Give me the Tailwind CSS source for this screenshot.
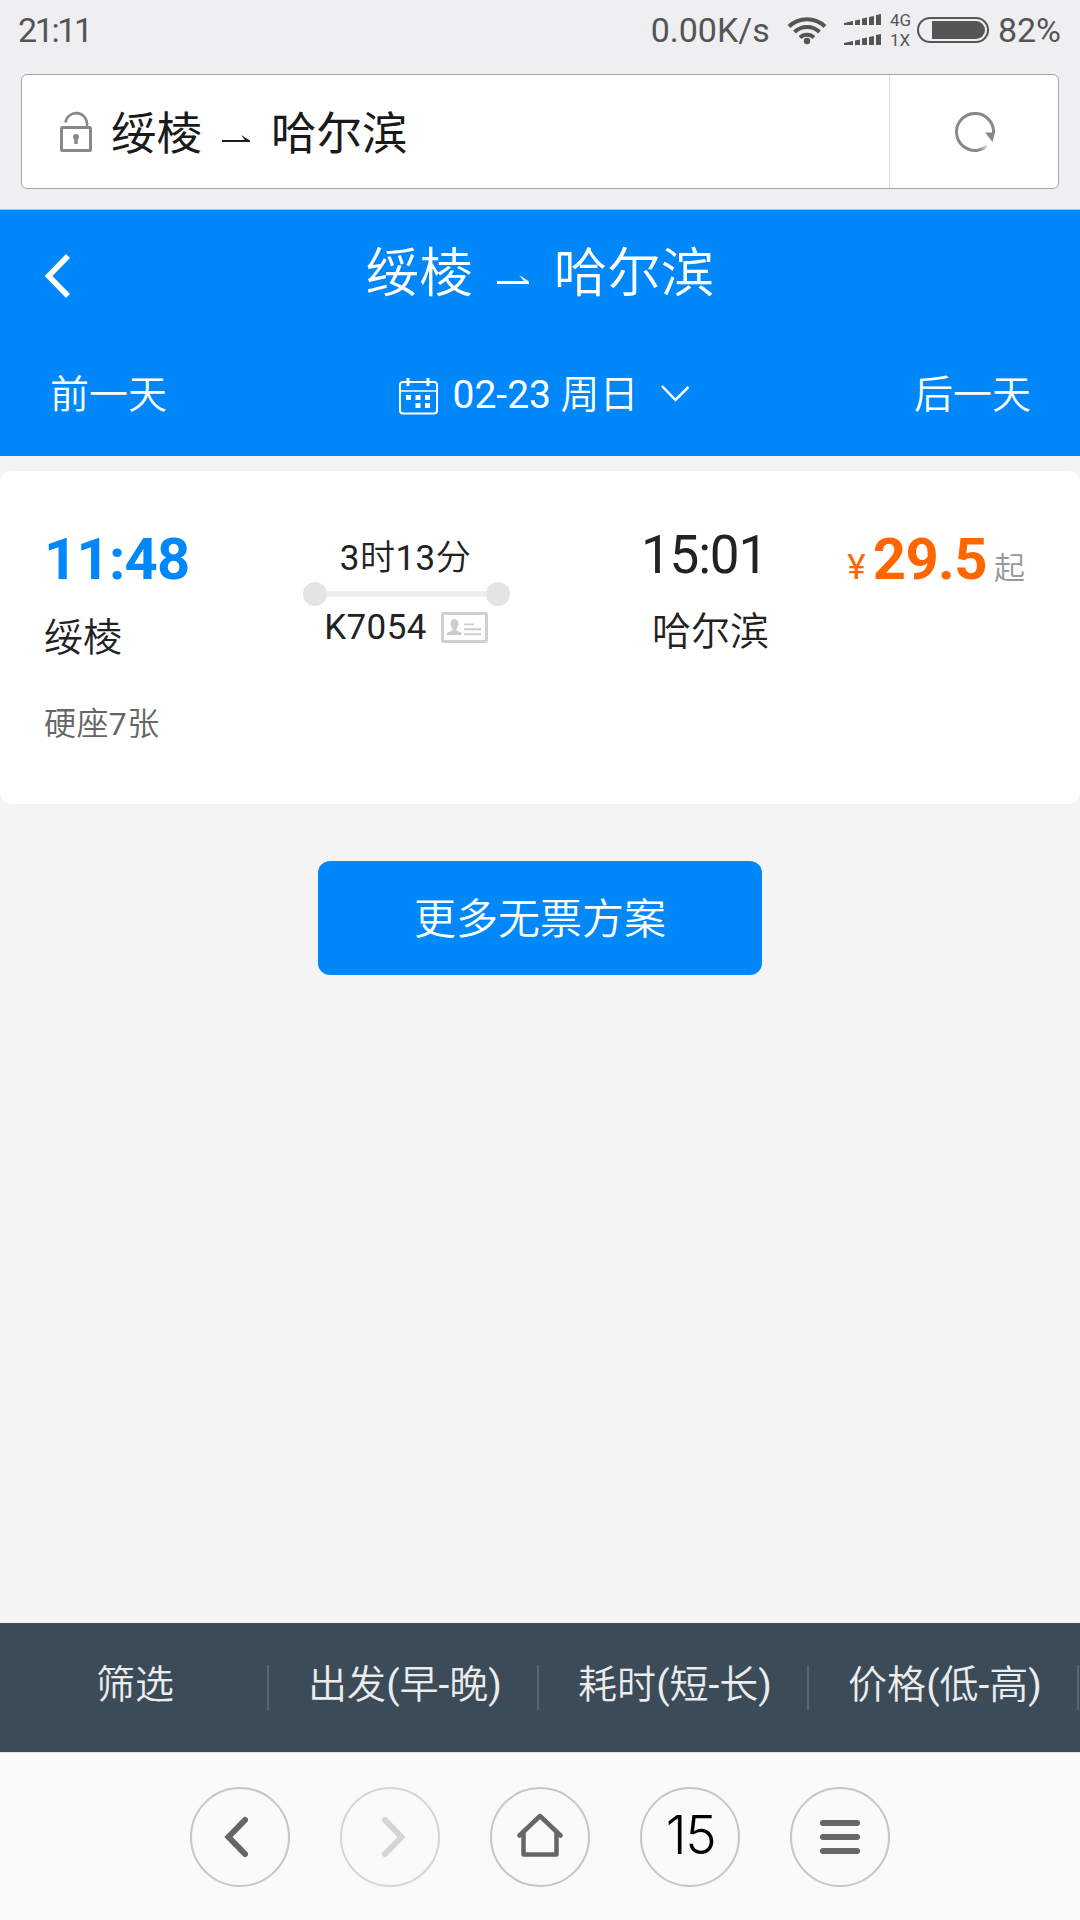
<!DOCTYPE html>
<html lang="zh-CN">
<head>
  <meta charset="UTF-8" />
  <meta name="viewport" content="width=device-width, initial-scale=1.0" />
  <title>绥棱 - 哈尔滨</title>
  <script src="https://cdn.jsdelivr.net/npm/@tailwindcss/browser@4"></script>
</head>
<body class="w-[1080px] h-[1920px] flex flex-col overflow-hidden bg-[#f4f4f4] text-[#222] leading-none whitespace-nowrap font-[Roboto,'Noto_Sans_CJK_SC',sans-serif]">

  <!-- Status bar -->
  <div class="h-[74px] shrink-0 bg-[#efeff1] text-[#555] text-[34px] flex items-start justify-between pl-[18px] pr-[19px]">
    <span class="leading-[60px] tracking-[-2.4px]">21:11</span>
    <div class="flex items-center h-[60px]">
      <span class="mr-[17px]">0.00K/s</span>
      <svg class="w-[40px] h-[30px] mr-[17px]" viewBox="0 0 40 30" fill="none" stroke="#555" stroke-width="4">
        <path d="M2 11.5a26 26 0 0 1 36 0" />
        <path d="M7.5 17a18 18 0 0 1 25 0" />
        <path d="M13 22.5a10 10 0 0 1 14 0" />
        <circle cx="20" cy="26" r="3.2" fill="#555" stroke="none" />
      </svg>
      <svg class="w-[38px] h-[32px] mr-[8px]" viewBox="0 0 38 32" fill="#555">
        <path id="bars" d="M0 9l9-2v4H0zM11 6.500l5-1V11h-5zM18 4.500l5-1V11h-5zM25 3l5-1v9h-5zM32 1l5-1v11h-5z" />
        <use href="#bars" y="20" />
      </svg>
      <div class="flex flex-col w-[27px] text-[17px] leading-[20px]">
        <span>4G</span>
        <span>1X</span>
      </div>
      <svg class="w-[72px] h-[26px] mr-[9px]" viewBox="0 0 72 26">
        <rect x="1" y="1" width="70" height="24" rx="12" fill="none" stroke="#555" stroke-width="2" />
        <path d="M15 4h44a9 9 0 0 1 0 18H15z" fill="#555" />
      </svg>
      <span>82%</span>
    </div>
  </div>

  <!-- Address bar -->
  <div class="h-[136px] shrink-0 bg-[#efeff1] border-b border-[#bbb] px-[21px]">
    <div class="h-[115px] flex bg-white border border-[#a5a5a5] rounded-[6px]">
      <div class="flex-1 flex items-center pl-[38px] border-r border-[#ddd]">
        <svg class="w-[32px] h-[41px] mr-[19px]" viewBox="0 0 32 41" fill="none" stroke="#888">
          <path d="M5.500 11.500a10.800 10.800 0 0 1 21.500 1V16" stroke-width="2.600" />
          <rect x="1.500" y="16.500" width="29" height="23" rx="1" stroke-width="3" />
          <circle cx="16" cy="26" r="3" fill="#888" stroke="none" />
          <path d="M16 26v7" stroke-width="3.500" />
        </svg>
        <span class="text-[45.500px] text-[#1a1a1a] pt-[6px]">绥棱</span>
        <svg class="w-[28px] h-[8px] ml-[20px] mr-[21px] mt-[14px]" viewBox="0 0 28 8" fill="#1a1a1a">
          <path d="M0 5h23L19 0l9 5.500V7H0z" />
        </svg>
        <span class="text-[45.500px] text-[#1a1a1a] pt-[6px]">哈尔滨</span>
      </div>
      <div class="w-[168px] flex items-center justify-center pl-[2px]">
        <svg class="w-[40px] h-[40px]" viewBox="0 0 40 40">
          <defs>
            <linearGradient id="tail" gradientUnits="userSpaceOnUse" x1="24" y1="36" x2="33" y2="33">
              <stop offset="0" stop-color="#888" />
              <stop offset="1" stop-color="#888" stop-opacity="0.100" />
            </linearGradient>
          </defs>
          <path d="M38.500 21A18.500 18.500 0 1 0 23 38.200" fill="none" stroke="#888" stroke-width="3" />
          <path d="M23 38.200a18.500 18.500 0 0 0 9-4.200" fill="none" stroke="url(#tail)" stroke-width="3" />
          <path d="M30 20.500h10l-2.500 9.500z" fill="#888" />
        </svg>
      </div>
    </div>
  </div>

  <!-- Blue header -->
  <header class="h-[246px] shrink-0 bg-[#0087fa] text-white font-[350]">
    <div class="h-[124px] flex items-center">
      <svg class="w-[60px] h-[44px] pl-[44px] box-content mt-[8px]" viewBox="0 0 60 44" fill="none" stroke="#fff" stroke-width="5.500">
        <path d="M24 2L4.500 22 24 42" />
      </svg>
      <div class="flex-1 flex items-center justify-center pr-[104px] text-[53.500px]">
        <span class="pt-[4px]">绥棱</span>
        <svg class="w-[32px] h-[9px] ml-[24px] mr-[25px] mt-[14px]" viewBox="0 0 32 9" fill="#fff">
          <path d="M0 6h27L22 0l10 6.500V9H0z" />
        </svg>
        <span class="pt-[4px]">哈尔滨</span>
      </div>
    </div>
    <div class="h-[122px] flex items-center justify-between pl-[50px] pr-[49px] pb-1 text-[39px]">
      <span class="pt-[4px]">前一天</span>
      <div class="flex items-center pl-[7px]">
        <svg class="w-[39px] h-[37px] mr-[15px] mt-[6px]" viewBox="0 0 39 37" fill="none" stroke="#fff">
          <rect x="1" y="4" width="37" height="31.500" rx="3" stroke-width="2" />
          <path d="M1 13h37" stroke-width="1.300" />
          <path d="M9 0v8M29 0v8" stroke-width="3" />
          <path d="M7 19.500h5M16.500 19.500h5M26 19.500h5M16.500 27.500h5M26 27.500h5" stroke-width="5" />
        </svg>
        <span class="pt-[4px]"><span class="font-normal">02-23</span> 周日</span>
        <svg class="w-[28px] h-[17px] ml-[23px]" viewBox="0 0 28 17" fill="none" stroke="#fff" stroke-width="2.500">
          <path d="M1 1l13.500 14L27.500 2" />
        </svg>
      </div>
      <span class="pt-[4px]">后一天</span>
    </div>
  </header>

  <!-- Train card -->
  <main class="flex-1 pt-[15px] font-[350]">
    <section class="h-[333px] bg-white rounded-[12px] pl-[44px] pr-[55px] pt-[54px]">
      <div class="flex h-[164px]">
        <div class="w-[257px]">
          <div class="text-[58px] leading-[68px] font-bold text-[#0087fa] tracking-[-0.800px]">11:48</div>
          <div class="text-[39px] leading-[39px] mt-[26px]">绥棱</div>
        </div>
        <div class="w-[209px] flex flex-col items-center text-[35px]">
          <div class="leading-[40px] mt-[14px] tracking-[0.500px]"><span class="font-normal">3</span>时<span class="font-normal">13</span>分</div>
          <div class="w-[208px] h-[24px] flex items-center mt-[3px] pl-[1px]">
            <i class="w-[24px] h-[24px] rounded-full bg-[#e4e4e4]"></i>
            <i class="flex-1 h-[6px] bg-[#eee]"></i>
            <i class="w-[24px] h-[24px] rounded-full bg-[#e4e4e4]"></i>
          </div>
          <div class="flex items-center leading-[40px] mt-[2px] pl-[1px]">
            <span class="tracking-[0.400px] mr-[14px] font-normal">K7054</span>
            <svg class="w-[47px] h-[31px] mb-[2px]" viewBox="0 0 47 31" fill="#ccc">
              <rect x="1.500" y="1.500" width="44" height="28" rx="1" fill="none" stroke="#d0d0d0" stroke-width="3" />
              <ellipse cx="13.500" cy="12" rx="4" ry="5" />
              <path d="M11.500 15h4v3.500l5 2.200V23H6v-2.300l5.500-2.200z" />
              <path d="M23 11.500h10v1.800H23zM23 16.300h17v2H23zM23 21.200h17v2H23z" />
            </svg>
          </div>
        </div>
        <div class="flex-1 pl-[131px]">
          <div class="text-[53px] leading-[60px] font-normal tracking-[-1.2px]">15:01</div>
          <div class="text-[39px] leading-[39px] mt-[28px] pl-[11px]">哈尔滨</div>
        </div>
        <div class="flex items-baseline h-[68px] leading-[68px]">
          <span class="text-[35px] text-[#f60] mr-[7px] font-normal">¥</span>
          <span class="text-[58px] font-bold text-[#f60] tracking-[-0.600px]">29.5</span>
          <span class="text-[31px] text-[#999] ml-[7px]">起</span>
        </div>
      </div>
      <div class="text-[32px] leading-[32px] text-[#666] mt-[19px] tracking-[0.400px]">硬座<span class="font-normal">7</span>张</div>
    </section>

    <button class="block w-[444px] h-[114px] mt-[57px] mx-auto pt-[3px] rounded-[12px] bg-[#0087fa] text-white text-[42px]">更多无票方案</button>
  </main>

  <!-- Sort tabs -->
  <div class="h-[129px] shrink-0 bg-[#3c4b58] text-[#ececec] text-[39px] font-[350] grid grid-cols-4 items-center">
    <div class="h-[45px] leading-[40px] mr-[1px] pl-[3px] text-center border-r-2 border-[#566571]">筛选</div>
    <div class="h-[45px] leading-[40px] mr-[1px] pl-[3px] text-center border-r-2 border-[#566571]">出发<span class="font-normal">(</span>早<span class="font-normal">-</span>晚<span class="font-normal">)</span></div>
    <div class="h-[45px] leading-[40px] mr-[1px] pl-[3px] text-center border-r-2 border-[#566571]">耗时<span class="font-normal">(</span>短<span class="font-normal">-</span>长<span class="font-normal">)</span></div>
    <div class="h-[45px] leading-[40px] mr-[1px] pl-[3px] text-center border-r-2 border-[#566571]">价格<span class="font-normal">(</span>低<span class="font-normal">-</span>高<span class="font-normal">)</span></div>
  </div>

  <!-- Browser toolbar -->
  <nav class="h-[168px] shrink-0 bg-[#fafafa] border-t border-[#e3e3e3] flex items-center justify-center gap-[50px]">
    <a class="w-[100px] h-[100px] rounded-full border-2 border-[#c6c6c6] flex items-center justify-center">
      <svg class="w-[48px] h-[48px]" viewBox="0 0 48 48" fill="none" stroke="#666" stroke-width="6" stroke-linecap="round">
        <path d="M29 7L12.500 24 29 41" />
      </svg>
    </a>
    <a class="w-[100px] h-[100px] rounded-full border-2 border-[#d5d5d5] flex items-center justify-center">
      <svg class="w-[48px] h-[48px]" viewBox="0 0 48 48" fill="none" stroke="#d5d5d5" stroke-width="6" stroke-linecap="round">
        <path d="M19 7l16.500 17L19 41" />
      </svg>
    </a>
    <a class="w-[100px] h-[100px] rounded-full border-2 border-[#c6c6c6] flex items-center justify-center">
      <svg class="w-[48px] h-[48px]" viewBox="0 0 48 48" fill="none" stroke="#666" stroke-width="4.500" stroke-linecap="round" stroke-linejoin="round">
        <path d="M3.500 22.500L24 3l20.500 19.500" />
        <path d="M7.500 20v21.500h33V20" />
      </svg>
    </a>
    <a class="w-[100px] h-[100px] rounded-full border-2 border-[#c6c6c6] flex items-center justify-center pb-[3px] pl-[1px] text-black text-[53px] font-[350] tracking-[-1.5px] font-[Inter,sans-serif]">15</a>
    <a class="w-[100px] h-[100px] rounded-full border-2 border-[#c6c6c6] flex items-center justify-center">
      <svg class="w-[48px] h-[48px]" viewBox="0 0 48 48" fill="none" stroke="#666" stroke-width="6" stroke-linecap="round">
        <path d="M7 10h34M7 24h34M7 38h34" />
      </svg>
    </a>
  </nav>
</body>
</html>
